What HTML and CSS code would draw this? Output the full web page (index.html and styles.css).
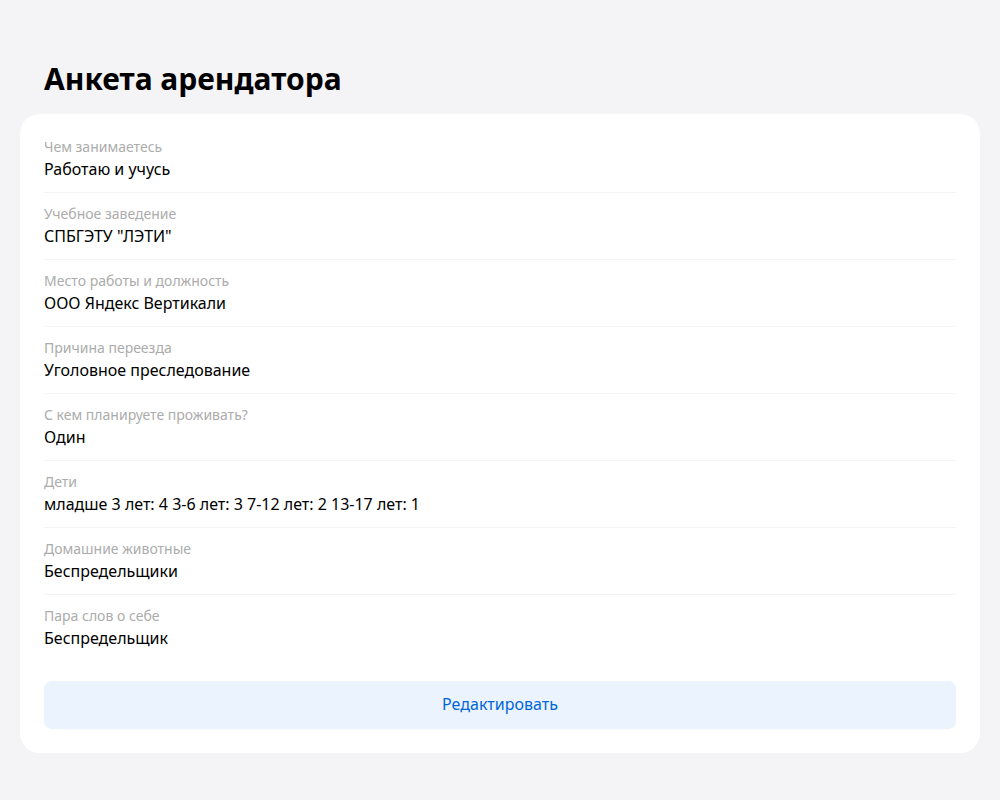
FILE: index.html
```html
<!DOCTYPE html>
<html lang="ru">
<head>
<meta charset="utf-8">
<meta name="viewport" content="width=device-width, initial-scale=1">
<title>Анкета арендатора</title>
<link rel="stylesheet" href="styles.css">
</head>
<body>
<main class="page">
  <h1 class="title">Анкета арендатора</h1>
  <section class="card">
    <dl class="list">
      <div class="item"><dt class="label">Чем занимаетесь</dt><dd class="value">Работаю и учусь</dd></div>
      <div class="item"><dt class="label">Учебное заведение</dt><dd class="value">СПБГЭТУ "ЛЭТИ"</dd></div>
      <div class="item"><dt class="label">Место работы и должность</dt><dd class="value">ООО Яндекс Вертикали</dd></div>
      <div class="item"><dt class="label">Причина переезда</dt><dd class="value">Уголовное преследование</dd></div>
      <div class="item"><dt class="label">С кем планируете проживать?</dt><dd class="value">Один</dd></div>
      <div class="item"><dt class="label">Дети</dt><dd class="value">младше 3 лет: 4 3-6 лет: 3 7-12 лет: 2 13-17 лет: 1</dd></div>
      <div class="item"><dt class="label">Домашние животные</dt><dd class="value">Беспредельщики</dd></div>
      <div class="item"><dt class="label">Пара слов о себе</dt><dd class="value">Беспредельщик</dd></div>
    </dl>
    <button class="button" type="button">Редактировать</button>
  </section>
</main>
</body>
</html>
```
FILE: styles.css
```css
* {
  box-sizing: border-box;
}

body {
  margin: 0;
  background: #f4f4f7;
  color: #000;
  font-family: "Noto Sans", "Open Sans", sans-serif;
}

.page {
  padding: 60px 20px 47px;
}

.title {
  margin: 0 0 16px;
  padding: 0 24px;
  font-size: 30px;
  line-height: 38px;
  font-weight: 700;
}

.card {
  padding: 12px 24px 24px;
  border-radius: 20px;
  background: #fff;
}

.list {
  margin: 0 0 20px;
}

.item {
  padding: 12px 0;
  border-bottom: 1px solid #f4f4f6;
}

.item:last-child {
  border-bottom: 0;
}

.label {
  font-size: 14px;
  line-height: 18px;
  color: #acacac;
}

.value {
  margin: 0;
  padding-top: 2px;
  font-size: 16px;
  line-height: 22px;
}

.button {
  display: block;
  width: 100%;
  height: 48px;
  padding: 0 16px 2px;
  border: 0;
  border-radius: 8px;
  background: #ebf3ff;
  color: #0066d9;
  font: inherit;
  font-size: 16px;
  line-height: 20px;
  cursor: pointer;
}
```
